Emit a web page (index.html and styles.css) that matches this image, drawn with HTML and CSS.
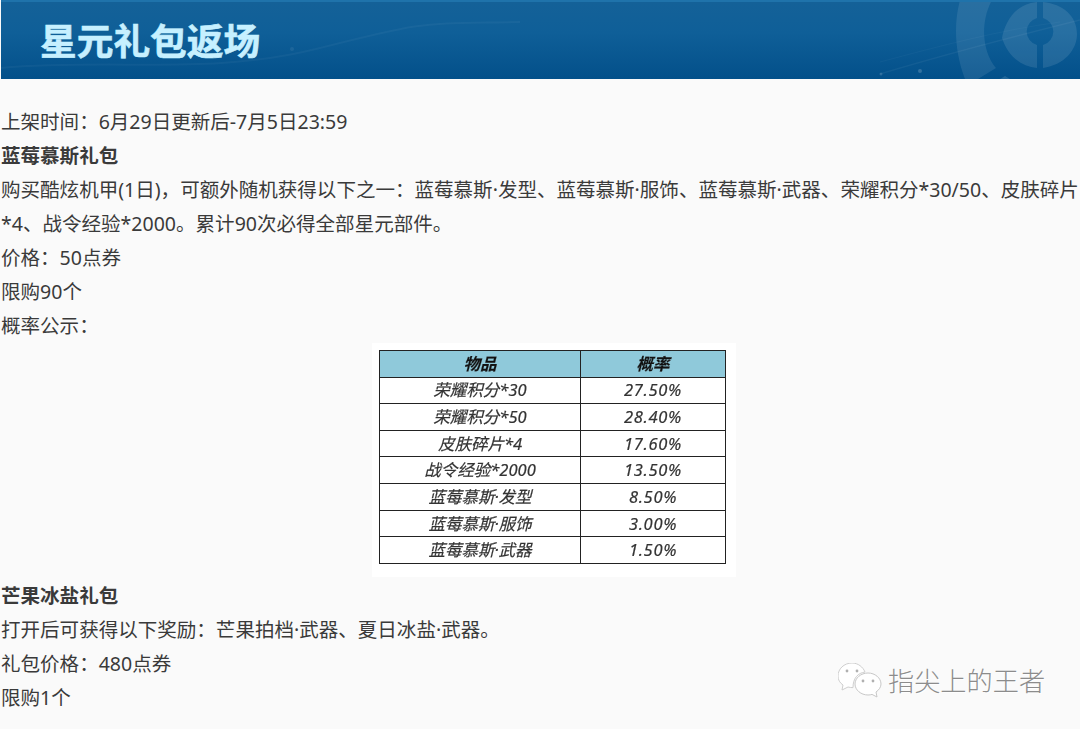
FILE: index.html
```html
<!DOCTYPE html>
<html lang="zh-CN">
<head>
<meta charset="utf-8">
<title>星元礼包返场</title>
<link rel="stylesheet" href="styles.css">
</head>
<body>
<header class="banner">
  <svg class="banner-art" viewBox="0 0 1080 79" aria-hidden="true">
    <g fill="none" stroke="#ffffff">
      <path d="M0 68C120 58 210 76 320 48S420 24 520 22" stroke-opacity=".04" stroke-width="2"/>
      <path d="M880 74C940 56 1000 40 1080 20" stroke-opacity=".05" stroke-width="1.5"/>
      <path d="M880 62C940 46 1000 30 1060 22" stroke-opacity=".03" stroke-width="1"/>
    </g>
    <path d="M960 0C954 22 954 50 965 79H978L996 68C982 52 980 22 992 0Z" fill="#ffffff" fill-opacity=".09"/>
    <path d="M1037 2C1015 4 1005 22 1002 38C1008 56 1020 66 1037 68V45A14 14 0 0 1 1037 18Z" fill="#ffffff" fill-opacity=".1"/>
    <path d="M1043 2V18A14 14 0 0 1 1043 45V68C1064 65 1077 50 1077 34C1077 16 1063 4 1043 2Z" fill="#ffffff" fill-opacity=".1"/>
    <path d="M1000 79L1005 76L1010 79Z" fill="#ffffff" fill-opacity=".12"/>
    <circle cx="920" cy="71" r="2" fill="#ffffff" fill-opacity=".18"/>
    <circle cx="881" cy="74" r="1.500" fill="#ffffff" fill-opacity=".15"/>
    <circle cx="292" cy="49" r="2" fill="#ffffff" fill-opacity=".07"/>
  </svg>
  <h1 class="banner-title">星元礼包返场</h1>
</header>
<main class="content">
  <p>上架时间&#xFF1A;6月29日更新后-7月5日23:59</p>
  <p class="strong">蓝莓慕斯礼包</p>
  <p>购买酷炫机甲(1日)&#xFF0C;可额外随机获得以下之一&#xFF1A;蓝莓慕斯·发型、蓝莓慕斯·服饰、蓝莓慕斯·武器、荣耀积分*30/50、皮肤碎片*4、战令经验*2000。累计90次必得全部星元部件。</p>
  <p>价格&#xFF1A;50点券</p>
  <p>限购90个</p>
  <p>概率公示&#xFF1A;</p>
  <div class="figure">
    <table class="odds">
      <thead>
        <tr><th class="col-item">物品</th><th>概率</th></tr>
      </thead>
      <tbody>
        <tr><td>荣耀积分*30</td><td class="pct">27.50%</td></tr>
        <tr><td>荣耀积分*50</td><td class="pct">28.40%</td></tr>
        <tr><td>皮肤碎片*4</td><td class="pct">17.60%</td></tr>
        <tr><td>战令经验*2000</td><td class="pct">13.50%</td></tr>
        <tr><td>蓝莓慕斯·发型</td><td class="pct">8.50%</td></tr>
        <tr><td>蓝莓慕斯·服饰</td><td class="pct">3.00%</td></tr>
        <tr><td>蓝莓慕斯·武器</td><td class="pct">1.50%</td></tr>
      </tbody>
    </table>
  </div>
  <p class="strong">芒果冰盐礼包</p>
  <p>打开后可获得以下奖励&#xFF1A;芒果拍档·武器、夏日冰盐·武器。</p>
  <p>礼包价格&#xFF1A;480点券</p>
  <p>限购1个</p>
</main>
<div class="watermark">
  <svg class="wm-icon" viewBox="0 0 44 36" aria-hidden="true">
    <path d="M14 0C6 0 0 6 0 13c0 4 2 7 5 9l-1 5 6-3c2 .5 3 .6 5 .6C15 15 20 10 27 9 25 4 20 0 14 0Z" fill="#fff" stroke="#cfcfcf" stroke-width="1"/>
    <path d="M30 10c-7 0-13 5-13 11s6 11 13 11c1.500 0 3-.2 4-.6l5 2.600-1-5c3-2 5-5 5-8 0-6-6-11-13-11Z" fill="#fff" stroke="#c8c8c8" stroke-width="1"/>
    <circle cx="9" cy="8" r="1.400" fill="#b0b0b0"/>
    <circle cx="19" cy="8" r="1.400" fill="#b0b0b0"/>
    <circle cx="25" cy="18" r="1.400" fill="#b0b0b0"/>
    <circle cx="35" cy="18" r="1.400" fill="#b0b0b0"/>
  </svg>
  <span class="wm-text">指尖上的王者</span>
</div>
</body>
</html>
```
FILE: styles.css
```css
html, body {
  margin: 0;
  padding: 0;
}
body {
  position: relative;
  width: 1080px;
  height: 729px;
  overflow: hidden;
  background: #fafafa;
  color: #3a3a3a;
  font-family: "Noto Sans", "Noto Sans CJK SC", sans-serif;
}
.banner {
  position: relative;
  box-sizing: border-box;
  height: 79px;
  margin-left: 1px;
  padding: 12px 0 0 39px;
  background: linear-gradient(180deg, #146198 0%, #0f5f98 40%, #03508a 100%);
  border-top: 2px solid #1f73ab;
  overflow: hidden;
}
.banner-art {
  position: absolute;
  left: -1px;
  top: -2px;
  width: 1080px;
  height: 79px;
}
.banner-title {
  position: relative;
  margin: 0;
  font-family: "Noto Sans CJK SC", sans-serif;
  font-size: 36.700px;
  line-height: 50px;
  font-weight: 700;
  color: #c6f0ff;
  -webkit-text-stroke: .6px #c6f0ff;
}
.content {
  padding: 26px 0 0 1px;
}
.content p {
  margin: 0;
  font-size: 19.550px;
  line-height: 34px;
}
.content .strong {
  font-weight: 700;
}
.figure {
  box-sizing: border-box;
  width: 364px;
  height: 234px;
  margin: 0 0 1.500px 371px;
  padding: 7px 7px;
  background: #fff;
}
.odds {
  width: 347px;
  height: 214px;
  border-collapse: collapse;
  table-layout: fixed;
  font-size: 16.500px;
  font-style: italic;
  color: #333;
  filter: blur(.35px);
  -webkit-text-stroke: .2px #333;
}
.odds th, .odds td {
  height: 26.600px;
  box-sizing: border-box;
  padding: 0;
  border: 1.500px solid #222;
  text-align: center;
  line-height: 20px;
}
.odds .pct {
  letter-spacing: .7px;
}
.odds th {
  background: #8fc9da;
  color: #111;
  font-weight: 700;
}
.col-item {
  width: 201px;
}
.watermark {
  position: absolute;
  left: 838px;
  top: 663px;
  display: flex;
  align-items: center;
  gap: 6px;
}
.wm-icon {
  width: 44px;
  height: 36px;
}
.wm-text {
  position: relative;
  top: -1px;
  font-family: "Noto Sans CJK SC", sans-serif;
  font-size: 26.200px;
  line-height: 36px;
  font-weight: 300;
  color: #8c8c8c;
  text-shadow: 1px 1px 1px #fff;
}
```
